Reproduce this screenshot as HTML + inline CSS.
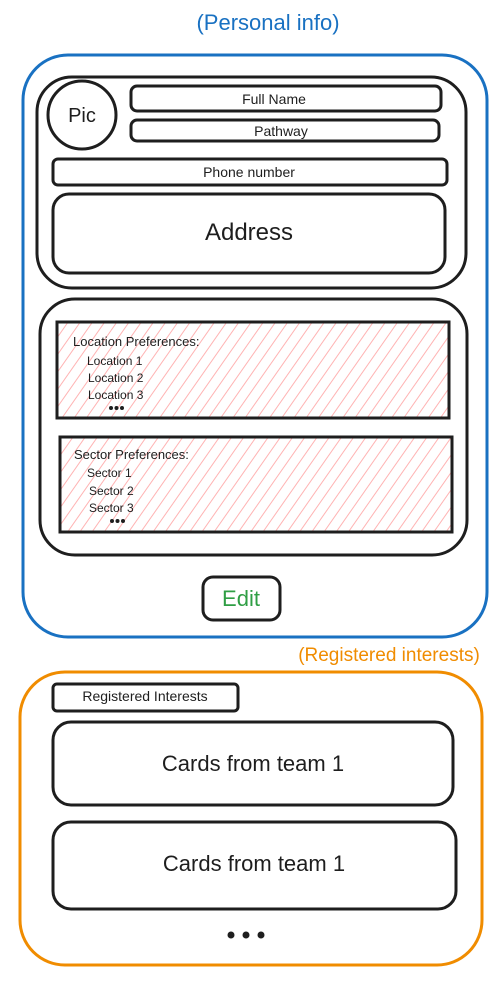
<!DOCTYPE html>
<html><head><meta charset="utf-8"><style>
html,body{margin:0;padding:0;background:#fff;width:500px;height:985px;overflow:hidden}
svg text{font-family:"Liberation Sans",sans-serif;fill:#1e1e1e}
</style></head><body>
<svg width="500" height="985" viewBox="0 0 500 985" xmlns="http://www.w3.org/2000/svg">
<defs>
<pattern id="h" width="10" height="10" patternUnits="userSpaceOnUse" patternTransform="rotate(35)">
<line x1="0" y1="0" x2="0" y2="10" stroke="#ffb3b3" stroke-width="2"/>
</pattern>
</defs>
<text x="268" y="30" text-anchor="middle" font-size="22" style="fill:#1971c2">(Personal info)</text>
<rect x="23" y="55" width="464" height="582" rx="45" fill="none" stroke="#1971c2" stroke-width="3"/>
<rect x="37" y="77" width="429" height="211" rx="35" fill="none" stroke="#1e1e1e" stroke-width="3"/>
<circle cx="82" cy="115" r="34" fill="none" stroke="#1e1e1e" stroke-width="3"/>
<text x="82" y="122" text-anchor="middle" font-size="20">Pic</text>
<rect x="131" y="86" width="310" height="25" rx="6" fill="none" stroke="#1e1e1e" stroke-width="3"/>
<text x="274" y="104" text-anchor="middle" font-size="14">Full Name</text>
<rect x="131" y="120" width="308" height="21" rx="6" fill="none" stroke="#1e1e1e" stroke-width="3"/>
<text x="281" y="136" text-anchor="middle" font-size="14">Pathway</text>
<rect x="53" y="159" width="394" height="26" rx="5" fill="none" stroke="#1e1e1e" stroke-width="3"/>
<text x="249" y="177" text-anchor="middle" font-size="14">Phone number</text>
<rect x="53" y="194" width="392" height="79" rx="16" fill="none" stroke="#1e1e1e" stroke-width="3"/>
<text x="249" y="240" text-anchor="middle" font-size="24">Address</text>
<rect x="40" y="299" width="427" height="256" rx="35" fill="none" stroke="#1e1e1e" stroke-width="3"/>
<rect x="57" y="322" width="392" height="96" fill="url(#h)" stroke="#1e1e1e" stroke-width="3"/>
<text x="73" y="346" font-size="13">Location Preferences:</text>
<text x="87" y="365" font-size="12">Location 1</text>
<text x="88" y="382" font-size="12">Location 2</text>
<text x="88" y="399" font-size="12">Location 3</text>
<circle cx="111" cy="408" r="2" fill="#1e1e1e"/><circle cx="116.5" cy="408" r="2" fill="#1e1e1e"/><circle cx="122" cy="408" r="2" fill="#1e1e1e"/>
<rect x="60" y="437" width="392" height="95" fill="url(#h)" stroke="#1e1e1e" stroke-width="3"/>
<text x="74" y="459" font-size="13">Sector Preferences:</text>
<text x="87" y="477" font-size="12">Sector 1</text>
<text x="89" y="495" font-size="12">Sector 2</text>
<text x="89" y="512" font-size="12">Sector 3</text>
<circle cx="112" cy="521" r="2" fill="#1e1e1e"/><circle cx="117.5" cy="521" r="2" fill="#1e1e1e"/><circle cx="123" cy="521" r="2" fill="#1e1e1e"/>
<rect x="203" y="577" width="77" height="43" rx="10" fill="none" stroke="#1e1e1e" stroke-width="3"/>
<text x="241" y="606" text-anchor="middle" font-size="22" style="fill:#2f9e44">Edit</text>
<text x="389" y="661" text-anchor="middle" font-size="19" style="fill:#f08c00">(Registered interests)</text>
<rect x="20" y="672" width="462" height="293" rx="45" fill="none" stroke="#f08c00" stroke-width="3"/>
<rect x="53" y="684" width="185" height="27" rx="4" fill="none" stroke="#1e1e1e" stroke-width="3"/>
<text x="145" y="701" text-anchor="middle" font-size="14">Registered Interests</text>
<rect x="53" y="722" width="400" height="83" rx="18" fill="none" stroke="#1e1e1e" stroke-width="3"/>
<text x="253" y="771" text-anchor="middle" font-size="22">Cards from team 1</text>
<rect x="53" y="822" width="403" height="87" rx="18" fill="none" stroke="#1e1e1e" stroke-width="3"/>
<text x="254" y="871" text-anchor="middle" font-size="22">Cards from team 1</text>
<circle cx="231" cy="935" r="3.5" fill="#1e1e1e"/>
<circle cx="246" cy="935" r="3.5" fill="#1e1e1e"/>
<circle cx="261" cy="935" r="3.5" fill="#1e1e1e"/>
</svg>
</body></html>
